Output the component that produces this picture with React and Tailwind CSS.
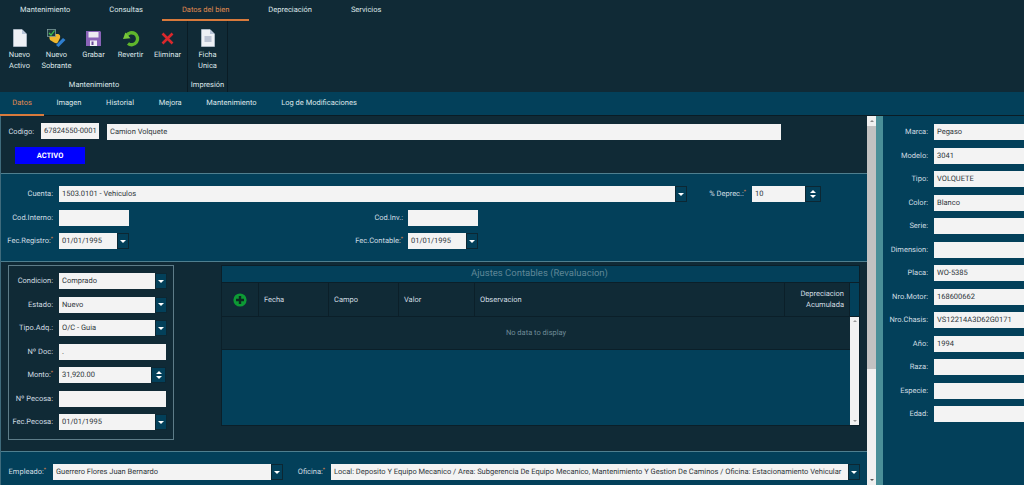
import React from 'react'

const font = { fontFamily: 'Roboto, "Noto Sans", sans-serif' }

const DocIcon = ({ inner }) => (
  <svg width="14" height="18" viewBox="0 0 14 18">
    <path d="M0.5 0.5H9L13.5 5V17.5H0.5Z" fill="#eef1f6" stroke="#c9d3e2" strokeWidth="0.6" />
    <path d="M9 0.5V5H13.5Z" fill="#b9c6da" />
    {inner && <rect x="3.5" y="7" width="7" height="6" fill="#bcc4d4" />}
  </svg>
)

const SobranteIcon = () => (
  <svg width="19" height="19" viewBox="0 0 19 19">
    <path d="M4 5H10C13 5 13.5 7 13 9L11 13C10 15 8 14 7 13.5L3 11C2 9 2 6 4 5Z" fill="#f0b72f" />
    <rect x="0.5" y="0.5" width="8" height="7" fill="#1f3b3f" stroke="#8aa8a8" strokeWidth="0.7" />
    <path d="M2 4L4 6L7.5 1.5" fill="none" stroke="#3fc24a" strokeWidth="1.2" />
    <path d="M9 16L16 9L18.5 11L11.5 18Z" fill="#2f7fd0" />
  </svg>
)

const SaveIcon = () => (
  <svg width="15" height="15" viewBox="0 0 15 15">
    <path d="M0 0H14L15 1V15H0Z" fill="#8a63b8" />
    <rect x="2.5" y="1" width="10" height="5.5" fill="#eceaf2" />
    <rect x="4" y="9.5" width="7" height="5.5" fill="#f1eff6" />
    <rect x="5.5" y="10.5" width="2" height="3.5" fill="#6a4a98" />
  </svg>
)

const RevertIcon = () => (
  <svg width="18" height="18" viewBox="0 0 18 18">
    <path d="M4.5 6.5A6 6 0 1 1 6 14.5" fill="none" stroke="#5fb52c" strokeWidth="3.4" />
    <path d="M0.5 9.5L8 10L4 3.5Z" fill="#77c63a" transform="rotate(-10 4 7)" />
  </svg>
)

const CloseIcon = () => (
  <svg width="13" height="13" viewBox="0 0 13 13">
    <path d="M1.5 1.5L11.5 11.5M11.5 1.5L1.5 11.5" stroke="#d9282c" strokeWidth="2.6" />
  </svg>
)

const PlusIcon = () => (
  <svg width="14" height="14" viewBox="0 0 14 14">
    <circle cx="7" cy="7" r="6.6" fill="#0d9a35" />
    <path d="M7 3V11M3 7H11" stroke="#0c2a20" strokeWidth="2.4" />
  </svg>
)

const Caret = () => (
  <span className="flex h-4 w-3 shrink-0 items-center justify-center border border-[#0c2733] bg-[#03405a]">
    <span className="border-x-[3px] border-t-[3px] border-x-transparent border-t-white" />
  </span>
)

const Spin = ({ wide }) => (
  <span className={`flex h-4 shrink-0 flex-col items-center justify-center gap-[2px] border border-[#0c2733] bg-[#03405a] ${wide ? 'w-4' : 'w-[15px]'}`}>
    <span className="border-x-[3px] border-b-[3px] border-x-transparent border-b-white" />
    <span className="border-x-[3px] border-t-[3px] border-x-transparent border-t-white" />
  </span>
)

const Input = ({ value, className = '' }) => (
  <div className={`flex h-4 shrink-0 items-center overflow-hidden whitespace-nowrap bg-[#f3f3f3] pl-[3px] text-[7.5px] leading-none text-[#2f373b] ${className}`}>
    {value}
  </div>
)

const Label = ({ text, req, className = 'w-[53px]' }) => (
  <div className={`shrink-0 whitespace-nowrap text-right text-[7.5px] leading-none text-[#d0dde2] ${className}`}>
    {text}
    {req && <span className="align-top text-[5px] text-[#e08a50]">*</span>}
  </div>
)

const TopTab = ({ text, active }) => (
  <div className={`flex h-[21px] items-center border-b-2 px-[19.5px] pt-[1px] text-[7.5px] ${active ? 'border-[#d87a3c] text-[#e08a50]' : 'border-transparent text-[#dde6e9]'}`}>
    {text}
  </div>
)

const SubTab = ({ text, active }) => (
  <div className={`flex h-[24px] items-center border-b-2 px-[12.3px] text-[7.5px] ${active ? 'border-[#d87a3c] text-[#e08a50]' : 'border-transparent text-[#dde6e9]'}`}>
    {text}
  </div>
)

const RibbonBtn = ({ icon, lines, w = 'w-[37px]' }) => (
  <div className={`flex flex-col items-center ${w}`}>
    <div className="flex h-[20px] items-center justify-center">{icon}</div>
    <div className="mt-[2px] text-center text-[7.5px] leading-[10.5px] text-[#dde6e9]">
      {lines.map((l) => (
        <div key={l}>{l}</div>
      ))}
    </div>
  </div>
)

const Row = ({ label, req, w = 'w-[46px]', children }) => (
  <div className="flex h-4 items-center gap-[6px]">
    <Label text={label} req={req} className={w} />
    {children}
  </div>
)

const SideRow = ({ label, value }) => (
  <div className="flex h-4 items-center gap-[6px]">
    <Label text={label} className="w-[44px]" />
    <Input value={value} className="flex-1" />
  </div>
)

const HeadCell = ({ className = '', children }) => (
  <div className={`flex items-center border-r border-[#0b1f29] px-[5px] text-[7.5px] text-[#d0dde2] ${className}`}>
    {children}
  </div>
)

const side = [
  ['Marca:', 'Pegaso'],
  ['Modelo:', '3041'],
  ['Tipo:', 'VOLQUETE'],
  ['Color:', 'Blanco'],
  ['Serie:', ''],
  ['Dimension:', ''],
  ['Placa:', 'WO-5385'],
  ['Nro.Motor:', '168600662'],
  ['Nro.Chasis:', 'VS12214A3D62G0171'],
  ['Año:', '1994'],
  ['Raza:', ''],
  ['Especie:', ''],
  ['Edad:', ''],
]

export default function App() {
  return (
    <div style={font} className="flex h-[485px] w-[1024px] flex-col overflow-hidden bg-[#03405a] [text-rendering:geometricPrecision]">
      {/* menu */}
      <div className="flex h-[21px] shrink-0 bg-[#102a36] pl-[0.5px]">
        <TopTab text="Mantenimiento" />
        <TopTab text="Consultas" />
        <TopTab text="Datos del bien" active />
        <TopTab text="Depreciación" />
        <TopTab text="Servicios" />
      </div>

      {/* ribbon */}
      <div className="flex h-[71px] shrink-0 bg-[#102a36]">
        <div className="flex w-[188px] flex-col border-r border-[#0a1c25] pl-[1px]">
          <div className="flex flex-1 pt-[7px]">
            <RibbonBtn icon={<DocIcon />} lines={['Nuevo', 'Activo']} />
            <RibbonBtn icon={<SobranteIcon />} lines={['Nuevo', 'Sobrante']} />
            <RibbonBtn icon={<SaveIcon />} lines={['Grabar']} />
            <RibbonBtn icon={<RevertIcon />} lines={['Revertir']} />
            <RibbonBtn icon={<CloseIcon />} lines={['Eliminar']} />
          </div>
          <div className="h-[13px] text-center text-[7.5px] leading-[12px] text-[#dde6e9]">Mantenimiento</div>
        </div>
        <div className="flex w-[40px] flex-col border-r border-[#0a1c25]">
          <div className="flex flex-1 justify-center pt-[7px]">
            <RibbonBtn icon={<DocIcon inner />} lines={['Ficha', 'Unica']} />
          </div>
          <div className="h-[13px] text-center text-[7.5px] leading-[12px] text-[#dde6e9]">Impresión</div>
        </div>
      </div>

      {/* sub tabs */}
      <div className="flex h-[24px] shrink-0 border-b border-[#0a1c25] bg-[#03405a]">
        <SubTab text="Datos" active />
        <SubTab text="Imagen" />
        <SubTab text="Historial" />
        <SubTab text="Mejora" />
        <SubTab text="Mantenimiento" />
        <SubTab text="Log de Modificaciones" />
      </div>

      <div className="flex min-h-0 flex-1">
        {/* main form */}
        <div className="flex w-[867px] shrink-0 flex-col border-l border-[#3f6b7c]">
          <div className="h-[58px] shrink-0 border-b border-[#4f7f8f] bg-[#102a36] pl-[7px] pt-[8px]">
            <div className="flex h-4 items-center">
              <Label text="Codigo:" className="w-[26px]" />
              <Input value="67824550-0001" className="ml-[7px] w-[58px] -translate-y-px" />
              <Input value="Camion Volquete" className="ml-[8px] w-[674px]" />
            </div>
            <div className="ml-[7px] mt-[7px] flex h-[17px] w-[70px] items-center justify-center bg-[#0000ff] text-[7.5px] font-bold text-white">
              ACTIVO
            </div>
          </div>

          <div className="flex h-[88px] shrink-0 flex-col gap-[7.5px] border-b border-[#4f7f8f] pl-[6px] pt-[12px]">
            <div className="flex h-4 items-center">
              <Row label="Cuenta:">
                <Input value="1503.0101 - Vehiculos" className="w-[616px]" />
              </Row>
              <Caret />
              <Label text="% Deprec.:" req className="ml-[19px] w-[40px]" />
              <Input value="10" className="ml-[6px] w-[53px]" />
              <Spin wide />
            </div>
            <div className="flex h-4 items-center">
              <Row label="Cod.Interno:">
                <Input className="w-[70px]" />
              </Row>
              <Label text="Cod.Inv.:" className="w-[274px]" />
              <Input className="ml-[5px] w-[70px]" />
            </div>
            <div className="flex h-4 items-center">
              <Row label="Fec.Registro:" req>
                <Input value="01/01/1995" className="w-[58px]" />
              </Row>
              <Caret />
              <Label text="Fec.Contable:" req className="w-[274px]" />
              <Input value="01/01/1995" className="ml-[5px] w-[58px]" />
              <Caret />
            </div>
          </div>

          <div className="flex h-[190px] shrink-0 gap-[47px] border-b border-[#4f7f8f] bg-[#102a36] pl-[7px] pt-[3px]">
            {/* datos de adquisicion */}
            <div className="flex h-[175px] w-[166px] shrink-0 flex-col gap-[7.5px] border border-[#5d7c88] pt-[7px]">
              <div className="flex h-4 items-center">
                <Row label="Condicion:" w="w-[44px]"><Input value="Comprado" className="w-[96px]" /></Row>
                <Caret />
              </div>
              <div className="flex h-4 items-center">
                <Row label="Estado:" w="w-[44px]"><Input value="Nuevo" className="w-[96px]" /></Row>
                <Caret />
              </div>
              <div className="flex h-4 items-center">
                <Row label="Tipo.Adq.:" w="w-[44px]"><Input value="O/C - Guia" className="w-[96px]" /></Row>
                <Caret />
              </div>
              <Row label="Nº Doc:" w="w-[44px]"><Input value="." className="w-[107px]" /></Row>
              <div className="flex h-4 items-center">
                <Row label="Monto:" req w="w-[44px]"><Input value="31,920.00" className="w-[92px]" /></Row>
                <Spin />
              </div>
              <Row label="Nº Pecosa:" w="w-[44px]"><Input className="w-[107px]" /></Row>
              <div className="flex h-4 items-center">
                <Row label="Fec.Pecosa:" w="w-[44px]"><Input value="01/01/1995" className="w-[96px]" /></Row>
                <Caret />
              </div>
            </div>

            {/* ajustes */}
            <div className="flex h-[161px] w-[639px] shrink-0 flex-col border border-[#0b1f29] bg-[#03405a]">
              <div className="flex h-[16px] shrink-0 items-center justify-center pr-[2px] text-[9.5px] text-[#5f8696]">
                Ajustes Contables (Revaluacion)
              </div>
              <div className="flex h-[35px] shrink-0 border-y border-[#0b1f29]">
                <HeadCell className="w-[37px] justify-center bg-[#102a36] !px-0"><PlusIcon /></HeadCell>
                <HeadCell className="w-[70px] bg-[#102a36]">Fecha</HeadCell>
                <HeadCell className="w-[70px] bg-[#102a36]">Campo</HeadCell>
                <HeadCell className="w-[76px] bg-[#102a36]">Valor</HeadCell>
                <HeadCell className="w-[310px] bg-[#102a36]">Observacion</HeadCell>
                <HeadCell className="w-[65px] justify-end bg-[#102a36] text-right leading-[10.5px]">
                  Depreciacion<br />Acumulada
                </HeadCell>
              </div>
              <div className="flex min-h-0 flex-1">
                <div className="flex flex-1 flex-col">
                  <div className="flex h-[33px] items-center justify-center border-b border-[#0b1f29] bg-[#102a36] text-[7.5px] text-[#6f8b97]">
                    No data to display
                  </div>
                </div>
                <div className="flex w-[9px] shrink-0 flex-col items-center justify-between bg-[#f2f2f2] py-[3px]">
                  <span className="border-x-[2px] border-b-[2px] border-x-transparent border-b-[#999]" />
                  <span className="border-x-[2px] border-t-[2px] border-x-transparent border-t-[#999]" />
                </div>
              </div>
            </div>
          </div>

          <div className="flex min-h-0 flex-1 items-start pl-[7px] pt-[12px]">
            <div className="flex h-4 items-center">
              <Label text="Empleado:" req className="w-[38px]" />
              <Input value="Guerrero Flores Juan Bernardo" className="ml-[7px] w-[218px]" />
              <Caret />
              <Label text="Oficina:" req className="ml-[13px] w-[29px]" />
              <Input
                value="Local: Deposito Y Equipo Mecanico / Area: Subgerencia De Equipo Mecanico, Mantenimiento Y Gestion De Caminos / Oficina: Estacionamiento Vehicular"
                className="ml-[6px] w-[517px]"
              />
              <Caret />
            </div>
          </div>
        </div>

        {/* scrollbar */}
        <div className="flex w-[9px] shrink-0 flex-col justify-between bg-[#f0f0f0]">
          <div className="flex h-[253px] flex-col items-center bg-[#c2c2c2]">
            <div className="flex h-[10px] w-full items-center justify-center bg-[#f0f0f0]">
              <span className="border-x-[2px] border-b-[2px] border-x-transparent border-b-[#888]" />
            </div>
          </div>
          <div className="flex h-[10px] items-center justify-center">
            <span className="border-x-[2px] border-t-[2px] border-x-transparent border-t-[#555]" />
          </div>
        </div>

        {/* splitter */}
        <div className="w-[7px] shrink-0 bg-[#4a8f98]" />

        {/* side panel */}
        <div className="flex min-w-0 flex-1 flex-col gap-[7.5px] pl-[1px] pt-[8px]">
          {side.map(([label, value]) => (
            <SideRow key={label} label={label} value={value} />
          ))}
        </div>
      </div>
    </div>
  )
}
